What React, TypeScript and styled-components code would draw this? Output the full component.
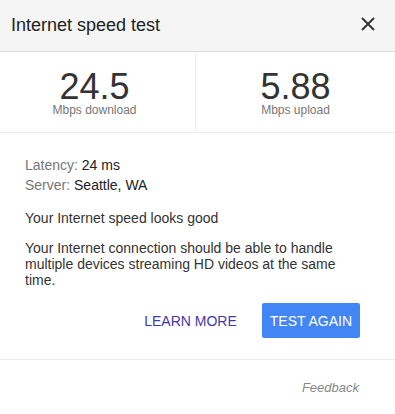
import React from "react";
import styled, { createGlobalStyle } from "styled-components";

const GlobalStyle = createGlobalStyle`
  html, body {
    margin: 0;
    padding: 0;
    background: #ffffff;
    font-family: "Liberation Sans", Arial, sans-serif;
  }
`;

const Card = styled.div`
  width: 395px;
  min-height: 414px;
  background: #ffffff;
  color: #333333;
`;

const Header = styled.header`
  height: 52px;
  box-sizing: border-box;
  display: flex;
  align-items: center;
  justify-content: space-between;
  padding: 0 20px 0 11px;
  background: #f5f5f5;
  border-bottom: 1px solid #dadada;
`;

const Title = styled.h1`
  margin: 0;
  font-size: 18px;
  line-height: 21px;
  font-weight: normal;
  color: #222222;
`;

const CloseButton = styled.button`
  border: 0;
  padding: 0;
  margin: 0 0 4px 0;
  background: transparent;
  display: flex;
  cursor: pointer;
`;

const Stats = styled.div`
  display: flex;
  border-bottom: 1px solid #ebebeb;
`;

const StatCell = styled.div<{ $width?: number; $shift?: number }>`
  box-sizing: border-box;
  flex: ${(p) => (p.$width ? `0 0 ${p.$width}px` : "1")};
  display: flex;
  flex-direction: column;
  align-items: center;
  padding: 18px ${(p) => p.$shift || 0}px 14px 0;
  border-right: ${(p) => (p.$width ? "1px solid #ededed" : "0")};
  margin: 1px 0;
`;

const StatValue = styled.div`
  font-size: 36px;
  line-height: 32px;
  color: #333333;
`;

const StatLabel = styled.div`
  font-size: 12px;
  line-height: 14px;
  color: #777777;
`;

const Body = styled.div`
  padding: 22px 40px 0 25px;
`;

const InfoLine = styled.div`
  font-size: 14px;
  line-height: 20px;
  color: #222222;
`;

const InfoLabel = styled.span`
  color: #777777;
`;

const Text = styled.p<{ $gap: number }>`
  margin: ${(p) => p.$gap}px 0 0 0;
  font-size: 14px;
  line-height: 16px;
  color: #333333;
`;

const Actions = styled.div`
  display: flex;
  justify-content: flex-end;
  align-items: center;
  gap: 25px;
  padding: 15px 35px 21px 0;
  border-bottom: 1px solid #ebebeb;
`;

const LinkButton = styled.button`
  border: 0;
  padding: 0;
  background: transparent;
  font-family: inherit;
  font-size: 14px;
  line-height: 16px;
  color: #4338a8;
  cursor: pointer;
`;

const PrimaryButton = styled.button`
  height: 35px;
  padding: 0 8px;
  border: 0;
  border-radius: 2px;
  background: #4285f4;
  color: #ffffff;
  font-family: inherit;
  font-size: 14px;
  line-height: 16px;
  cursor: pointer;
`;

const Footer = styled.footer`
  display: flex;
  justify-content: flex-end;
  padding: 20px 36px 0 0;
`;

const FeedbackLink = styled.a`
  font-size: 13px;
  line-height: 16px;
  font-style: italic;
  color: #888888;
  text-decoration: none;
`;

function CloseIcon() {
  return (
    <svg width="14" height="14" viewBox="0 0 14 14">
      <path
        d="M1 1 L13 13 M13 1 L1 13"
        stroke="#333333"
        strokeWidth="2"
        fill="none"
      />
    </svg>
  );
}

export default function App() {
  return (
    <>
      <GlobalStyle />
      <Card>
        <Header>
          <Title>Internet speed test</Title>
          <CloseButton aria-label="Close">
            <CloseIcon />
          </CloseButton>
        </Header>
        <Stats>
          <StatCell $width={196} $shift={6}>
            <StatValue>24.5</StatValue>
            <StatLabel>Mbps download</StatLabel>
          </StatCell>
          <StatCell>
            <StatValue>5.88</StatValue>
            <StatLabel>Mbps upload</StatLabel>
          </StatCell>
        </Stats>
        <Body>
          <InfoLine>
            <InfoLabel>Latency:</InfoLabel> 24 ms
          </InfoLine>
          <InfoLine>
            <InfoLabel>Server:</InfoLabel> Seattle, WA
          </InfoLine>
          <Text $gap={15}>Your Internet speed looks good</Text>
          <Text $gap={14}>
            Your Internet connection should be able to handle multiple devices
            streaming HD videos at the same time.
          </Text>
        </Body>
        <Actions>
          <LinkButton>LEARN MORE</LinkButton>
          <PrimaryButton>TEST AGAIN</PrimaryButton>
        </Actions>
        <Footer>
          <FeedbackLink href="#">Feedback</FeedbackLink>
        </Footer>
      </Card>
    </>
  );
}
